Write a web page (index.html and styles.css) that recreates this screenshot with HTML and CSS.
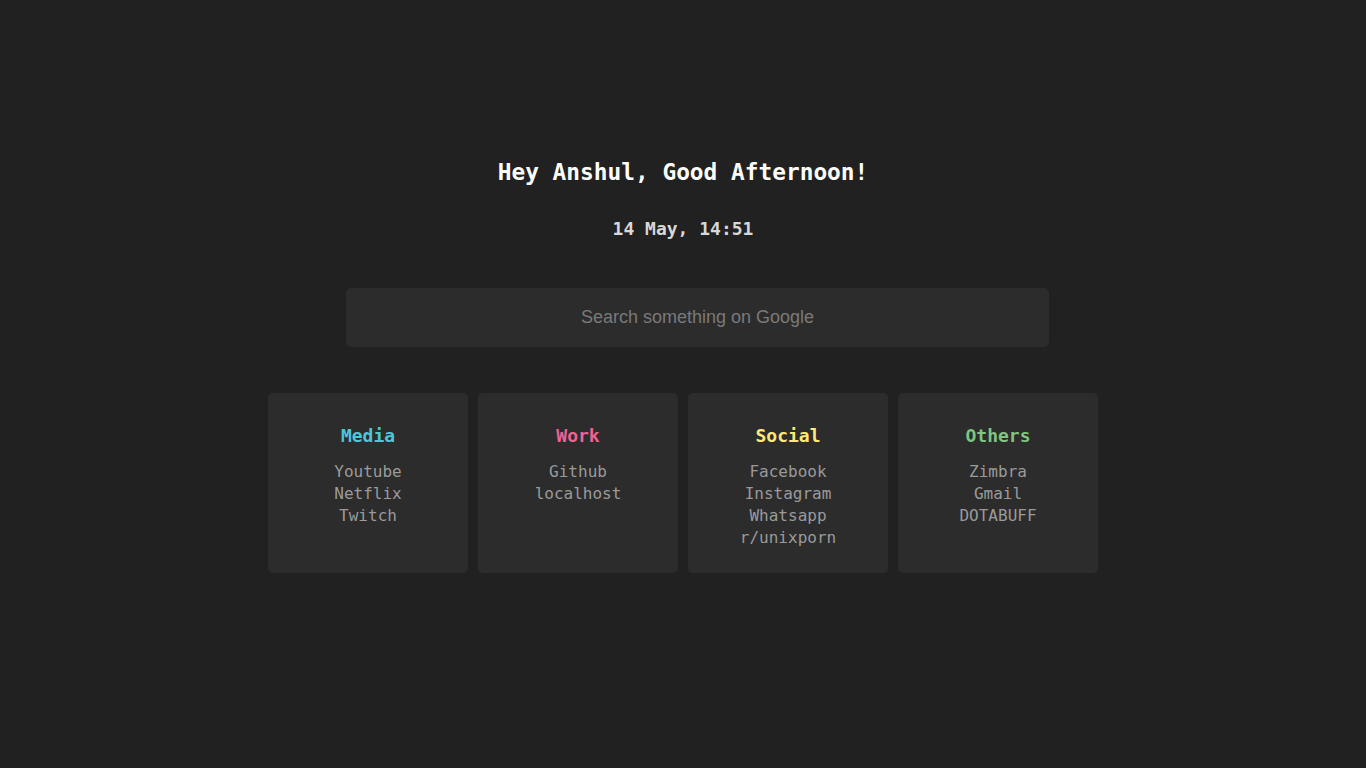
FILE: index.html
```html
<!DOCTYPE html>
<html lang="en">
<head>
<meta charset="utf-8">
<title>Startpage</title>
<link rel="stylesheet" href="styles.css">
</head>
<body>
<main class="page">
  <h1 class="greeting">Hey Anshul, Good Afternoon!</h1>
  <p class="datetime">14 May, 14:51</p>
  <form class="search">
    <input class="search-input" type="text" placeholder="Search something on Google">
  </form>
  <section class="cards">
    <div class="card">
      <h2 class="card-title media">Media</h2>
      <ul class="links">
        <li><a href="#">Youtube</a></li>
        <li><a href="#">Netflix</a></li>
        <li><a href="#">Twitch</a></li>
      </ul>
    </div>
    <div class="card">
      <h2 class="card-title work">Work</h2>
      <ul class="links">
        <li><a href="#">Github</a></li>
        <li><a href="#">localhost</a></li>
      </ul>
    </div>
    <div class="card">
      <h2 class="card-title social">Social</h2>
      <ul class="links">
        <li><a href="#">Facebook</a></li>
        <li><a href="#">Instagram</a></li>
        <li><a href="#">Whatsapp</a></li>
        <li><a href="#">r/unixporn</a></li>
      </ul>
    </div>
    <div class="card">
      <h2 class="card-title others">Others</h2>
      <ul class="links">
        <li><a href="#">Zimbra</a></li>
        <li><a href="#">Gmail</a></li>
        <li><a href="#">DOTABUFF</a></li>
      </ul>
    </div>
  </section>
</main>
</body>
</html>
```
FILE: styles.css
```css
* { box-sizing: border-box; }
html, body {
  margin: 0;
  padding: 0;
  background: #212121;
  height: 100%;
}
body {
  font-family: "DejaVu Sans Mono", "Liberation Mono", monospace;
}
.page {
  display: flex;
  flex-direction: column;
  align-items: center;
  padding-top: 158px;
}
.greeting {
  margin: 0;
  font-size: 22.8px;
  line-height: 28px;
  font-weight: bold;
  color: #ffffff;
}
.datetime {
  margin: 32px 0 0;
  font-size: 18px;
  line-height: 22px;
  font-weight: bold;
  color: #d8d8d8;
}
.search {
  margin: 48px 0 0 29px;
  width: 703px;
}
.search-input {
  display: block;
  width: 100%;
  height: 59px;
  border: none;
  border-radius: 5px;
  background: #2c2c2c;
  color: #cccccc;
  font-family: "Liberation Sans", Arial, sans-serif;
  font-size: 18px;
  text-align: center;
  outline: none;
}
.search-input::placeholder {
  color: #7a7a7a;
}
.cards {
  margin-top: 46px;
  display: flex;
  gap: 10px;
}
.card {
  width: 200px;
  height: 180px;
  background: #2c2c2c;
  border-radius: 5px;
  padding-top: 32px;
  text-align: center;
}
.card-title {
  margin: 0;
  font-size: 18px;
  line-height: 22px;
  font-weight: bold;
}
.media { color: #4dc6d9; }
.work { color: #f06292; }
.social { color: #ffe873; }
.others { color: #7fc57f; }
.links {
  list-style: none;
  margin: 14px 0 0;
  padding: 0;
}
.links li {
  font-size: 16px;
  line-height: 22px;
}
.links a {
  color: #9a9a9a;
  text-decoration: none;
}
```
